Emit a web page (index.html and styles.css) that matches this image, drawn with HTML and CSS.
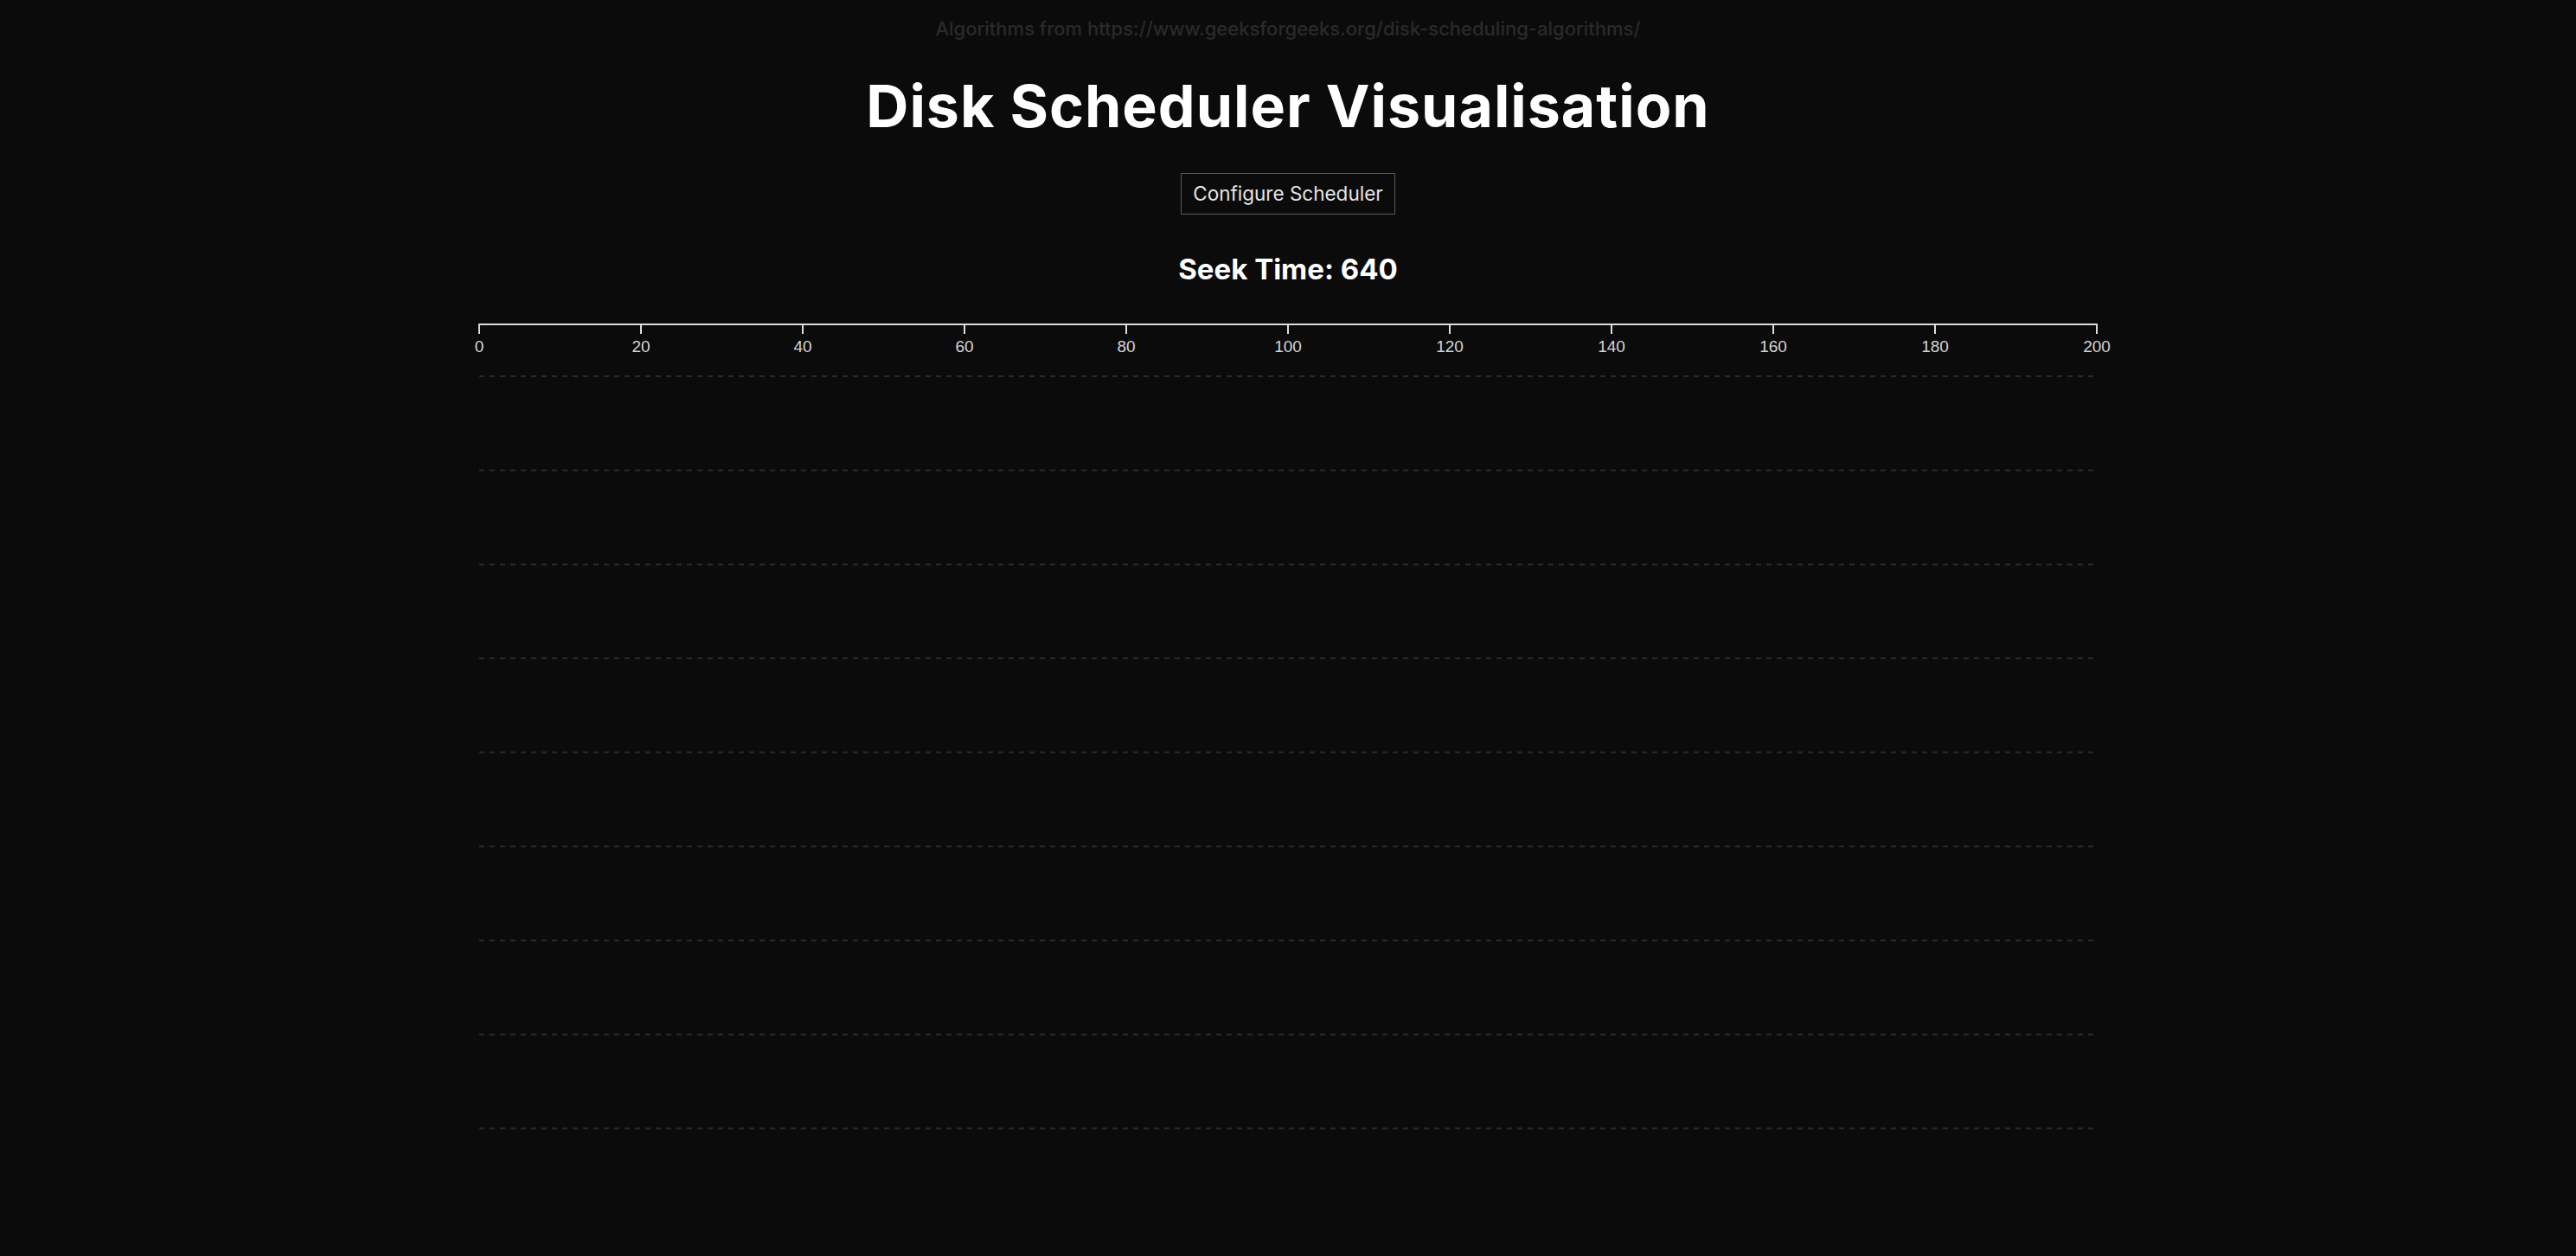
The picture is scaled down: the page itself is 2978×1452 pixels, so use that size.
FILE: index.html
```html
<!DOCTYPE html>
<html lang="en">
<head>
<meta charset="utf-8">
<title>Disk Scheduler Visualisation</title>
<link rel="stylesheet" href="styles.css">
</head>
<body>
<main class="page">
  <p class="source">Algorithms from https://www.geeksforgeeks.org/disk-scheduling-algorithms/</p>
  <h1 class="title">Disk Scheduler Visualisation</h1>
  <button class="config-btn" type="button">Configure Scheduler</button>
  <h2 class="seek">Seek Time: 640</h2>
  <svg class="chart" width="1930" height="950" viewBox="0 0 1930 950">
    <g transform="translate(30,10)">
      <g class="rows">
        <line x1="0" x2="1870" y1="60" y2="60"/>
        <line x1="0" x2="1870" y1="168.7" y2="168.7"/>
        <line x1="0" x2="1870" y1="277.4" y2="277.4"/>
        <line x1="0" x2="1870" y1="386.1" y2="386.1"/>
        <line x1="0" x2="1870" y1="494.8" y2="494.8"/>
        <line x1="0" x2="1870" y1="603.5" y2="603.5"/>
        <line x1="0" x2="1870" y1="712.2" y2="712.2"/>
        <line x1="0" x2="1870" y1="820.9" y2="820.9"/>
        <line x1="0" x2="1870" y1="929.6" y2="929.6"/>
      </g>
      <g class="axis">
        <path class="domain" d="M0,11V0H1870V11"/>
        <g class="tick" transform="translate(0,0)"><line y2="11"/><text y="32">0</text></g>
        <g class="tick" transform="translate(187,0)"><line y2="11"/><text y="32">20</text></g>
        <g class="tick" transform="translate(374,0)"><line y2="11"/><text y="32">40</text></g>
        <g class="tick" transform="translate(561,0)"><line y2="11"/><text y="32">60</text></g>
        <g class="tick" transform="translate(748,0)"><line y2="11"/><text y="32">80</text></g>
        <g class="tick" transform="translate(935,0)"><line y2="11"/><text y="32">100</text></g>
        <g class="tick" transform="translate(1122,0)"><line y2="11"/><text y="32">120</text></g>
        <g class="tick" transform="translate(1309,0)"><line y2="11"/><text y="32">140</text></g>
        <g class="tick" transform="translate(1496,0)"><line y2="11"/><text y="32">160</text></g>
        <g class="tick" transform="translate(1683,0)"><line y2="11"/><text y="32">180</text></g>
        <g class="tick" transform="translate(1870,0)"><line y2="11"/><text y="32">200</text></g>
      </g>
    </g>
  </svg>
</main>
</body>
</html>
```

FILE: styles.css
```css
html, body {
  margin: 0;
  padding: 0;
  background: #0b0b0c;
  color: #ffffff;
  font-family: Inter, "Noto Sans", sans-serif;
}

.page {
  display: flex;
  flex-direction: column;
  align-items: center;
  padding-top: 18px;
}

.source {
  margin: 0;
  font-size: 22px;
  line-height: 30px;
  font-weight: 500;
  color: #2a2a2c;
}

.title {
  margin: 34px 0 0;
  font-size: 68px;
  line-height: 80px;
  font-weight: 700;
  letter-spacing: 1px;
  color: #ffffff;
}

.config-btn {
  margin-top: 38px;
  height: 48px;
  padding: 0 13px;
  background: transparent;
  border: 1px solid #5a5a5a;
  border-radius: 0;
  color: #e4e4e4;
  font-family: Inter, "Noto Sans", sans-serif;
  font-size: 22.5px;
  line-height: 46px;
}

.seek {
  margin: 43px 0 0;
  font-size: 33px;
  line-height: 40px;
  font-weight: 700;
  color: #ffffff;
}

.chart {
  display: block;
  margin-top: 34px;
  overflow: visible;
}

.rows line {
  stroke: #2a2a2a;
  stroke-width: 2;
  stroke-dasharray: 6 6;
}

.axis .domain {
  fill: none;
  stroke: #dcdcdc;
  stroke-width: 2;
}

.axis .tick line {
  stroke: #dcdcdc;
  stroke-width: 2;
}

.axis .tick text {
  fill: #d4d4d4;
  font-family: "Liberation Sans", Arial, sans-serif;
  font-size: 19px;
  text-anchor: middle;
}
```
